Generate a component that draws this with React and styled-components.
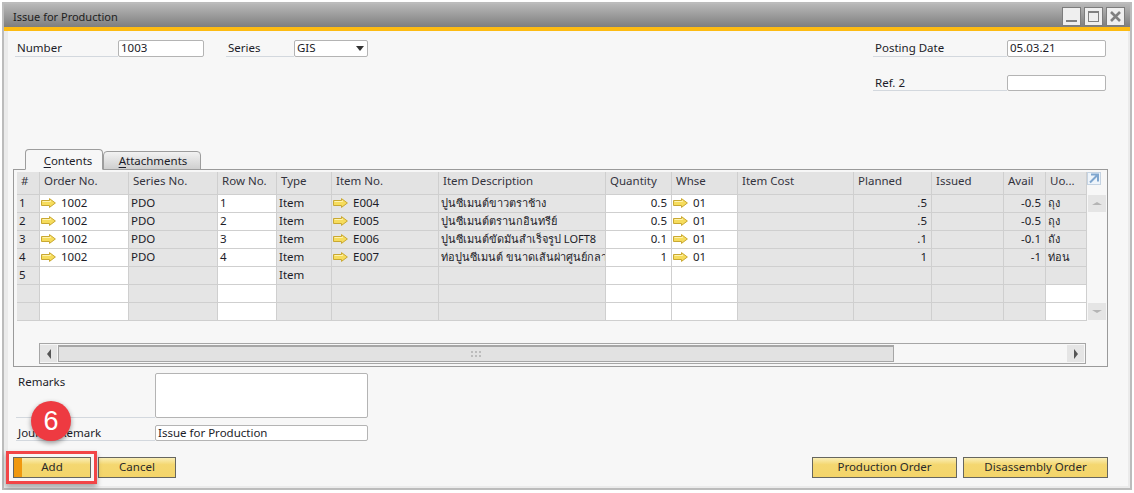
import React from 'react';
import styled, { createGlobalStyle } from 'styled-components';

const GlobalStyle = createGlobalStyle`
  html, body { margin: 0; padding: 0; background: #fff; }
  body { font-family: "Noto Sans", "Open Sans", sans-serif; font-size: 11.5px; color: #1c1c28; }
`;

const COLUMNS = [
  { title: '#', width: 23 },
  { title: 'Order No.', width: 89, white: true },
  { title: 'Series No.', width: 89 },
  { title: 'Row No.', width: 59, white: true },
  { title: 'Type', width: 55 },
  { title: 'Item No.', width: 107 },
  { title: 'Item Description', width: 167, thai: true },
  { title: 'Quantity', width: 66, white: true, right: true },
  { title: 'Whse', width: 66, white: true },
  { title: 'Item Cost', width: 116 },
  { title: 'Planned', width: 78, right: true },
  { title: 'Issued', width: 72 },
  { title: 'Avail', width: 42, right: true },
  { title: 'Uo...', width: 41, thai: true },
];

const ROWS = [
  ['1', '1002', 'PDO', '1', 'Item', 'E004', 'ปูนซีเมนต์ขาวตราช้าง', '0.5', '01', '', '.5', '', '-0.5', 'ถุง'],
  ['2', '1002', 'PDO', '2', 'Item', 'E005', 'ปูนซีเมนต์ตรานกอินทรีย์', '0.5', '01', '', '.5', '', '-0.5', 'ถุง'],
  ['3', '1002', 'PDO', '3', 'Item', 'E006', 'ปูนซีเมนต์ขัดมันสำเร็จรูป LOFT8', '0.1', '01', '', '.1', '', '-0.1', 'ถัง'],
  ['4', '1002', 'PDO', '4', 'Item', 'E007', 'ท่อปูนซีเมนต์ ขนาดเส้นผ่าศูนย์กลาง', '1', '01', '', '1', '', '-1', 'ท่อน'],
  ['5', '', '', '', 'Item', '', '', '', '', '', '', '', '', ''],
  ['', '', '', '', '', '', '', '', '', '', '', '', '', ''],
  ['', '', '', '', '', '', '', '', '', '', '', '', '', ''],
];

const LINK_COLUMNS = [1, 5, 8];

const Window = styled.div`
  margin: 2px 2px 0 2px;
  height: 488px;
  box-sizing: border-box;
  border: 2px solid #bcbcbc;
  background: #fff;
  display: flex;
  flex-direction: column;
`;

const TitleBar = styled.div`
  height: 23px;
  flex: none;
  display: flex;
  align-items: center;
  justify-content: space-between;
  padding: 0 5px 0 9px;
  background: linear-gradient(#b8b8b8, #7e7e7e);
  border-bottom: 4px solid #fdbb12;
`;

const Title = styled.span`
  color: #1e1e1e;
  font-size: 11px;
  padding-top: 2px;
`;

const Controls = styled.div`
  display: flex;
  gap: 3px;
  margin-top: 1px;
`;

const ControlButton = styled.div`
  width: 19px;
  height: 19px;
  box-sizing: border-box;
  border: 1px solid #7d7d7d;
  background: #efefef;
  display: flex;
  align-items: center;
  justify-content: center;
`;

const Body = styled.div`
  flex: 1;
  padding: 9px 20px 0 5px;
  background: #f7f7f7;
  border-style: solid;
  border-color: #ebebeb;
  border-width: 0 2px 2px 4px;
`;

const TopForm = styled.div`
  height: 109px;
  box-sizing: border-box;
  padding: 0 2px;
  display: flex;
  justify-content: space-between;
`;

const FieldRow = styled.div`
  display: flex;
  gap: 22px;
`;

const FieldColumn = styled.div`
  display: flex;
  flex-direction: column;
  gap: 18px;
`;

const Field = styled.div`
  display: flex;
`;

const Label = styled.div`
  width: ${(p) => p.$width}px;
  height: ${(p) => p.$height || 17}px;
  box-sizing: border-box;
  padding: ${(p) => (p.$height > 20 ? '1px' : '0')} 0 0 2px;
  line-height: 15px;
  border-bottom: 1px solid #d3d8de;
  white-space: nowrap;
  overflow: hidden;
`;

const Input = styled.div`
  width: ${(p) => p.$width}px;
  height: ${(p) => p.$height || 17}px;
  box-sizing: border-box;
  padding-left: 2px;
  line-height: 13px;
  background: #fff;
  border: 1px solid #b4b4b4;
  border-radius: 2px;
  position: relative;
`;

const DropArrow = styled.span`
  position: absolute;
  right: 3px;
  top: 5px;
  border-left: 4px solid transparent;
  border-right: 4px solid transparent;
  border-top: 5px solid #333;
`;

const TabStrip = styled.div`
  height: 21px;
  margin-left: 12px;
  margin-bottom: -1px;
  display: flex;
  align-items: flex-end;
  position: relative;
  z-index: 1;
`;

const Tab = styled.div`
  width: ${(p) => p.$width}px;
  height: ${(p) => (p.$active ? 21 : 19)}px;
  box-sizing: border-box;
  padding-left: ${(p) => (p.$active ? 8 : 2)}px;
  text-align: center;
  line-height: ${(p) => (p.$active ? 22 : 18)}px;
  border: 1px solid #9d9d9d;
  border-radius: 4px 4px 0 0;
  background: ${(p) => (p.$active ? '#f7f7f7' : 'linear-gradient(#f2f2f2, #cfcfcf)')};
  ${(p) => p.$active && 'border-bottom-color: #f7f7f7;'}
  & u { text-underline-offset: 2px; }
`;

const Panel = styled.div`
  height: 198px;
  box-sizing: border-box;
  border: 1px solid #9a9a9a;
  padding: 2px 0 0 3px;
`;

const TableWrap = styled.div`
  display: flex;
`;

const Table = styled.div`
  display: grid;
  grid-template-columns: ${COLUMNS.map((c) => `${c.width}px`).join(' ')};
  grid-template-rows: 23px repeat(7, 18px);
`;

const HeadCell = styled.div`
  box-sizing: border-box;
  background: #e3e3e3;
  border-right: 1px solid #cfcfcf;
  border-bottom: 1px solid #cfcfcf;
  padding-left: 4px;
  line-height: 17px;
  color: #33333d;
  white-space: nowrap;
  overflow: hidden;
`;

const Cell = styled.div`
  box-sizing: border-box;
  background: ${(p) => (p.$white ? '#fff' : '#e5e5e5')};
  border-right: 1px solid #cfcfcf;
  border-bottom: 1px solid #cfcfcf;
  padding: ${(p) => (p.$right ? '0 4px 2px 0' : '0 0 2px 2px')};
  display: flex;
  align-items: center;
  justify-content: ${(p) => (p.$right ? 'flex-end' : 'flex-start')};
  gap: 5px;
  font-size: ${(p) => (p.$thai ? '11px' : 'inherit')};
  line-height: 14px;
  white-space: nowrap;
  overflow: hidden;
`;

const SideColumn = styled.div`
  width: 19px;
  margin-left: 1px;
  display: flex;
  flex-direction: column;
`;

const ExpandBox = styled.div`
  height: 23px;
  flex: none;
  margin-left: -1px;
  display: flex;
  align-items: flex-start;
`;

const VerticalBar = styled.div`
  height: 125px;
  display: flex;
  flex-direction: column;
  justify-content: space-between;
  padding-right: 1px;
  background: #f7f7f7;
`;

const BarButton = styled.div`
  height: 17px;
  width: 18px;
  background: #e5e5e5;
  display: flex;
  align-items: center;
  justify-content: center;
`;

const Triangle = styled.span`
  border-left: 5px solid transparent;
  border-right: 5px solid transparent;
  ${(p) => (p.$up ? 'border-bottom' : 'border-top')}: 3px solid #b4b4b4;
`;

const HorizontalBar = styled.div`
  margin: 22px 21px 0 22px;
  height: 21px;
  box-sizing: border-box;
  border: 1px solid #a6a6a6;
  padding: 1px 1px 1px 0;
  display: flex;
  justify-content: space-between;
`;

const BarLeft = styled.div`
  display: flex;
  flex: none;
`;

const EndButton = styled.div`
  width: 17px;
  height: 17px;
  background: #e5e5e5;
  display: flex;
  align-items: center;
  justify-content: center;
`;

const SideTriangle = styled.span`
  border-top: 5px solid transparent;
  border-bottom: 5px solid transparent;
  ${(p) => (p.$left ? 'border-right' : 'border-left')}: 4px solid #555;
`;

const Thumb = styled.div`
  width: 836px;
  margin-left: 1px;
  height: 17px;
  box-sizing: border-box;
  background: #e2e2e2;
  border: 1px solid #a6a6a6;
  border-top-width: 2px;
  display: flex;
  align-items: center;
  justify-content: center;
`;

const Grip = styled.div`
  display: grid;
  grid-template-columns: repeat(3, 2px);
  gap: 2px;
  & i { width: 2px; height: 2px; background: #bcbcbc; }
`;

const LowerForm = styled.div`
  padding: 6px 0 0 3px;
  display: flex;
  flex-direction: column;
  gap: 7px;
`;

const ButtonRow = styled.div`
  margin-top: 16px;
  display: flex;
  justify-content: space-between;
`;

const ButtonGroup = styled.div`
  display: flex;
  gap: ${(p) => p.$gap}px;
`;

const ActionSlot = styled.div`
  position: relative;
`;

const ActionButton = styled.div`
  width: ${(p) => p.$width}px;
  height: 21px;
  box-sizing: border-box;
  border: 1px solid #66665f;
  background: linear-gradient(#faeeb6 0, #f4d770 35%, #f4d56a 100%);
  text-align: center;
  line-height: 18px;
  color: #2a2a2a;
  ${(p) => p.$primary && `
    background: linear-gradient(90deg, #f0980f 0 8px, transparent 8px),
      linear-gradient(#faeeb6 0, #f4d770 35%, #f4d56a 100%);
  `}
`;

const Highlight = styled.div`
  position: absolute;
  left: -7px;
  top: -6px;
  width: 91px;
  height: 33px;
  box-sizing: border-box;
  border: 3px solid #f24547;
  box-shadow: 0 3px 5px rgba(0, 0, 0, 0.35);
`;

const StepBadge = styled.div`
  position: absolute;
  left: 18px;
  top: -56px;
  width: 40px;
  height: 40px;
  border-radius: 50%;
  background: #ee3a41;
  color: #fff;
  font-family: "Liberation Sans", sans-serif;
  font-size: 27px;
  line-height: 40px;
  text-align: center;
  box-shadow: 0 2px 5px rgba(0, 0, 0, 0.4);
`;

const ArrowIcon = styled.svg`
  flex: none;
  margin-left: -1px;
`;

const LinkArrow = () => (
  <ArrowIcon width="15" height="10" viewBox="0 0 15 10">
    <path d="M0.5 2.5H8.5V0.6L14.4 5L8.5 9.4V7.5H0.5Z" fill="#f6dc5c" stroke="#c9a832" strokeWidth="1" />
    <path d="M1.5 3.5H9.5V2.6" fill="none" stroke="#fff3b0" strokeWidth="1" />
  </ArrowIcon>
);

const ExpandIcon = () => (
  <svg width="14" height="13" viewBox="0 0 14 13">
    <rect x="0.5" y="0.5" width="13" height="12" fill="#eef4fa" stroke="#c5d3e2" />
    <path d="M4 2.5H11V9.5M11 2.5L3 10.5" fill="none" stroke="#7fa6cf" strokeWidth="2" />
  </svg>
);

function App() {
  return (
    <>
      <GlobalStyle />
      <Window>
        <TitleBar>
          <Title>Issue for Production</Title>
          <Controls>
            <ControlButton>
              <svg width="13" height="13" viewBox="0 0 13 13"><rect x="1" y="10" width="11" height="2" fill="#808080" /></svg>
            </ControlButton>
            <ControlButton>
              <svg width="13" height="13" viewBox="0 0 13 13"><rect x="1.5" y="1.5" width="10" height="10" fill="none" stroke="#808080" /><rect x="1" y="1" width="11" height="2" fill="#808080" /></svg>
            </ControlButton>
            <ControlButton>
              <svg width="13" height="13" viewBox="0 0 13 13"><path d="M2 2L11 11M11 2L2 11" stroke="#808080" strokeWidth="2.6" /></svg>
            </ControlButton>
          </Controls>
        </TitleBar>
        <Body>
          <TopForm>
            <FieldRow>
              <Field>
                <Label $width={103}>Number</Label>
                <Input $width={86}>1003</Input>
              </Field>
              <Field>
                <Label $width={68}>Series</Label>
                <Input $width={74}>GIS<DropArrow /></Input>
              </Field>
            </FieldRow>
            <FieldColumn>
              <Field>
                <Label $width={134}>Posting Date</Label>
                <Input $width={99}>05.03.21</Input>
              </Field>
              <Field>
                <Label $width={134} $height={16}>Ref. 2</Label>
                <Input $width={99} $height={16} />
              </Field>
            </FieldColumn>
          </TopForm>

          <TabStrip>
            <Tab $active $width={78}><u>C</u>ontents</Tab>
            <Tab $width={98}><u>A</u>ttachments</Tab>
          </TabStrip>
          <Panel>
            <TableWrap>
              <Table>
                {COLUMNS.map((col) => <HeadCell key={col.title}>{col.title}</HeadCell>)}
                {ROWS.map((row, r) =>
                  row.map((value, c) => (
                    <Cell
                      key={`${r}-${c}`}
                      $right={COLUMNS[c].right}
                      $thai={COLUMNS[c].thai}
                      $white={COLUMNS[c].white || (c === 13 && r > 4)}
                    >
                      {value && LINK_COLUMNS.includes(c) && <LinkArrow />}
                      {value}
                    </Cell>
                  ))
                )}
              </Table>
              <SideColumn>
                <ExpandBox><ExpandIcon /></ExpandBox>
                <VerticalBar>
                  <BarButton><Triangle $up /></BarButton>
                  <BarButton><Triangle /></BarButton>
                </VerticalBar>
              </SideColumn>
            </TableWrap>
            <HorizontalBar>
              <BarLeft>
                <EndButton><SideTriangle $left /></EndButton>
                <Thumb>
                  <Grip>{[0, 1, 2, 3, 4, 5].map((i) => <i key={i} />)}</Grip>
                </Thumb>
              </BarLeft>
              <EndButton><SideTriangle /></EndButton>
            </HorizontalBar>
          </Panel>

          <LowerForm>
            <Field>
              <Label $width={139} $height={45}>Remarks</Label>
              <Input $width={213} $height={45} />
            </Field>
            <Field>
              <Label $width={139} $height={16}>Journal Remark</Label>
              <Input $width={213} $height={16}>Issue for Production</Input>
            </Field>
          </LowerForm>

          <ButtonRow>
            <ButtonGroup $gap={7}>
              <ActionSlot>
                <ActionButton $primary $width={78}>Add</ActionButton>
                <Highlight />
                <StepBadge>6</StepBadge>
              </ActionSlot>
              <ActionButton $width={78}>Cancel</ActionButton>
            </ButtonGroup>
            <ButtonGroup $gap={6}>
              <ActionButton $width={145}>Production Order</ActionButton>
              <ActionButton $width={145}>Disassembly Order</ActionButton>
            </ButtonGroup>
          </ButtonRow>
        </Body>
      </Window>
    </>
  );
}

export default App;
